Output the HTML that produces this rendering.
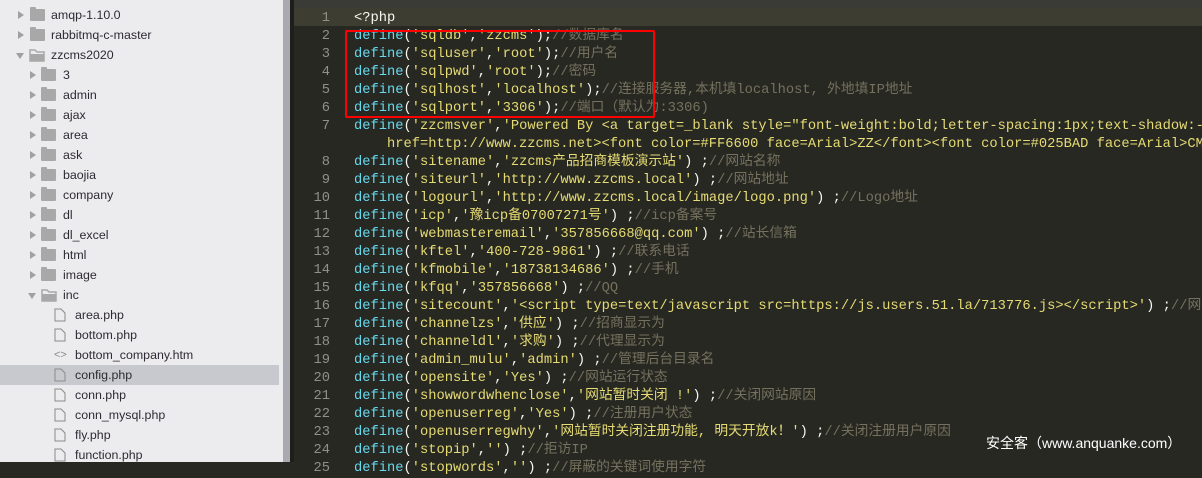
<!DOCTYPE html>
<html><head><meta charset="utf-8"><style>
*{margin:0;padding:0;box-sizing:border-box}
body{width:1202px;height:462px;overflow:hidden;background:#272822;position:relative;font-family:"Liberation Sans","Noto Sans CJK SC",sans-serif}
#side{position:absolute;left:0;top:0;width:283px;height:462px;background:#ececee;overflow:hidden}
#sb{position:absolute;left:283px;top:0;width:7px;height:462px;background:#a9a9b1}
#gap{position:absolute;left:290px;top:0;width:4px;height:462px;background:#1e1e1b}
.row{position:absolute;left:0;width:279px;height:20px;font-size:12.4px;color:#2e2a33;line-height:20px}
.row.sel{background:#c7c9cf}
.row span{position:absolute;top:0}
.arr{position:absolute;width:0;height:0}
.ar{border-left:6px solid #a0a0a0;border-top:4.5px solid transparent;border-bottom:4.5px solid transparent;top:6px}
.ad{border-top:6px solid #a0a0a0;border-left:4.5px solid transparent;border-right:4.5px solid transparent;top:8px}
.fold{position:absolute;top:4px;width:15px;height:12px;background:#a8a8a8;border-radius:1px}
.fold:before{content:"";position:absolute;left:0;top:-2px;width:6px;height:3px;background:#a8a8a8;border-radius:1px 1px 0 0}
.file{position:absolute;top:3px}
#tab{position:absolute;left:294px;top:0;right:0;height:8px;background:#3a3a36}
#hl{position:absolute;left:294px;top:8px;right:0;height:18px;background:#3e3d32}
.ln{position:absolute;left:294px;width:36px;text-align:right;font:13.75px/18px "Liberation Mono",monospace;color:#8f908a}
.cd{position:absolute;left:354px;white-space:pre;font:13.75px/18px "Liberation Mono","Noto Sans CJK SC",monospace;color:#f8f8f2}
.k{color:#66d9ef}.s{color:#e6db74}.c{color:#75715e}
#box{position:absolute;left:345px;top:30px;width:310px;height:88px;border:2px solid #f00;border-radius:2px}
#wm{position:absolute;left:986px;top:433px;font-size:14px;color:#fff;font-family:"Liberation Sans","Noto Sans CJK SC",sans-serif}
</style></head><body>
<div id="side">
<div class="row" style="top:5px"><i class="arr ar" style="left:18px"></i><i class="fold" style="left:30px"></i><span style="left:51px">amqp-1.10.0</span></div>
<div class="row" style="top:25px"><i class="arr ar" style="left:18px"></i><i class="fold" style="left:30px"></i><span style="left:51px">rabbitmq-c-master</span></div>
<div class="row" style="top:45px"><i class="arr ad" style="left:16px"></i><svg class="file" style="left:29px;top:4px" width="16" height="13"><path d="M1 1h5l2 2h7v9H1z" fill="none" stroke="#a8a8a8" stroke-width="1.5"/><path d="M1 5h14v7H1z" fill="#a8a8a8"/></svg><span style="left:51px">zzcms2020</span></div>
<div class="row" style="top:65px"><i class="arr ar" style="left:30px"></i><i class="fold" style="left:41px"></i><span style="left:63px">3</span></div>
<div class="row" style="top:85px"><i class="arr ar" style="left:30px"></i><i class="fold" style="left:41px"></i><span style="left:63px">admin</span></div>
<div class="row" style="top:105px"><i class="arr ar" style="left:30px"></i><i class="fold" style="left:41px"></i><span style="left:63px">ajax</span></div>
<div class="row" style="top:125px"><i class="arr ar" style="left:30px"></i><i class="fold" style="left:41px"></i><span style="left:63px">area</span></div>
<div class="row" style="top:145px"><i class="arr ar" style="left:30px"></i><i class="fold" style="left:41px"></i><span style="left:63px">ask</span></div>
<div class="row" style="top:165px"><i class="arr ar" style="left:30px"></i><i class="fold" style="left:41px"></i><span style="left:63px">baojia</span></div>
<div class="row" style="top:185px"><i class="arr ar" style="left:30px"></i><i class="fold" style="left:41px"></i><span style="left:63px">company</span></div>
<div class="row" style="top:205px"><i class="arr ar" style="left:30px"></i><i class="fold" style="left:41px"></i><span style="left:63px">dl</span></div>
<div class="row" style="top:225px"><i class="arr ar" style="left:30px"></i><i class="fold" style="left:41px"></i><span style="left:63px">dl_excel</span></div>
<div class="row" style="top:245px"><i class="arr ar" style="left:30px"></i><i class="fold" style="left:41px"></i><span style="left:63px">html</span></div>
<div class="row" style="top:265px"><i class="arr ar" style="left:30px"></i><i class="fold" style="left:41px"></i><span style="left:63px">image</span></div>
<div class="row" style="top:285px"><i class="arr ad" style="left:28px"></i><svg class="file" style="left:41px;top:4px" width="16" height="13"><path d="M1 1h5l2 2h7v9H1z" fill="none" stroke="#a8a8a8" stroke-width="1.5"/><path d="M1 5h14v7H1z" fill="#a8a8a8"/></svg><span style="left:63px">inc</span></div>
<div class="row" style="top:305px"><svg class="file" style="left:54px" width="12" height="14"><path d="M1 1h6l4 4v8H1z" fill="none" stroke="#8a8a8a"/></svg><span style="left:75px">area.php</span></div>
<div class="row" style="top:325px"><svg class="file" style="left:54px" width="12" height="14"><path d="M1 1h6l4 4v8H1z" fill="none" stroke="#8a8a8a"/></svg><span style="left:75px">bottom.php</span></div>
<div class="row" style="top:345px"><span style="left:54px;color:#8a8a8a;font-size:11px">&lt;&gt;</span><span style="left:75px">bottom_company.htm</span></div>
<div class="row sel" style="top:365px"><svg class="file" style="left:54px" width="12" height="14"><path d="M1 1h6l4 4v8H1z" fill="none" stroke="#8a8a8a"/></svg><span style="left:75px">config.php</span></div>
<div class="row" style="top:385px"><svg class="file" style="left:54px" width="12" height="14"><path d="M1 1h6l4 4v8H1z" fill="none" stroke="#8a8a8a"/></svg><span style="left:75px">conn.php</span></div>
<div class="row" style="top:405px"><svg class="file" style="left:54px" width="12" height="14"><path d="M1 1h6l4 4v8H1z" fill="none" stroke="#8a8a8a"/></svg><span style="left:75px">conn_mysql.php</span></div>
<div class="row" style="top:425px"><svg class="file" style="left:54px" width="12" height="14"><path d="M1 1h6l4 4v8H1z" fill="none" stroke="#8a8a8a"/></svg><span style="left:75px">fly.php</span></div>
<div class="row" style="top:445px"><svg class="file" style="left:54px" width="12" height="14"><path d="M1 1h6l4 4v8H1z" fill="none" stroke="#8a8a8a"/></svg><span style="left:75px">function.php</span></div>
</div>
<div id="sb"></div><div id="gap"></div>
<div id="tab"></div><div id="hl"></div>
<div class="ln" style="top:10px">1<br>2<br>3<br>4<br>5<br>6<br>7<br><br>8<br>9<br>10<br>11<br>12<br>13<br>14<br>15<br>16<br>17<br>18<br>19<br>20<br>21<br>22<br>23<br>24<br>25</div>
<div class="cd" style="top:10px">&lt;?php
<span class="k">define</span>(<span class="s">'sqldb'</span>,<span class="s">'zzcms'</span>);<span class="c">//数据库名</span>
<span class="k">define</span>(<span class="s">'sqluser'</span>,<span class="s">'root'</span>);<span class="c">//用户名</span>
<span class="k">define</span>(<span class="s">'sqlpwd'</span>,<span class="s">'root'</span>);<span class="c">//密码</span>
<span class="k">define</span>(<span class="s">'sqlhost'</span>,<span class="s">'localhost'</span>);<span class="c">//连接服务器,本机填localhost, 外地填IP地址</span>
<span class="k">define</span>(<span class="s">'sqlport'</span>,<span class="s">'3306'</span>);<span class="c">//端口（默认为:3306)</span>
<span class="k">define</span>(<span class="s">'zzcmsver'</span>,<span class="s">'Powered By &lt;a target=_blank style="font-weight:bold;letter-spacing:1px;text-shadow:-</span>
<span class="s">    href=http://www.zzcms.net&gt;&lt;font color=#FF6600 face=Arial&gt;ZZ&lt;/font&gt;&lt;font color=#025BAD face=Arial&gt;CMS</span>
<span class="k">define</span>(<span class="s">'sitename'</span>,<span class="s">'zzcms产品招商模板演示站'</span>) ;<span class="c">//网站名称</span>
<span class="k">define</span>(<span class="s">'siteurl'</span>,<span class="s">'http://www.zzcms.local'</span>) ;<span class="c">//网站地址</span>
<span class="k">define</span>(<span class="s">'logourl'</span>,<span class="s">'http://www.zzcms.local/image/logo.png'</span>) ;<span class="c">//Logo地址</span>
<span class="k">define</span>(<span class="s">'icp'</span>,<span class="s">'豫icp备07007271号'</span>) ;<span class="c">//icp备案号</span>
<span class="k">define</span>(<span class="s">'webmasteremail'</span>,<span class="s">'357856668@qq.com'</span>) ;<span class="c">//站长信箱</span>
<span class="k">define</span>(<span class="s">'kftel'</span>,<span class="s">'400-728-9861'</span>) ;<span class="c">//联系电话</span>
<span class="k">define</span>(<span class="s">'kfmobile'</span>,<span class="s">'18738134686'</span>) ;<span class="c">//手机</span>
<span class="k">define</span>(<span class="s">'kfqq'</span>,<span class="s">'357856668'</span>) ;<span class="c">//QQ</span>
<span class="k">define</span>(<span class="s">'sitecount'</span>,<span class="s">'&lt;script type=text/javascript src=https://js.users.51.la/713776.js&gt;&lt;/script&gt;'</span>) ;<span class="c">//网站</span>
<span class="k">define</span>(<span class="s">'channelzs'</span>,<span class="s">'供应'</span>) ;<span class="c">//招商显示为</span>
<span class="k">define</span>(<span class="s">'channeldl'</span>,<span class="s">'求购'</span>) ;<span class="c">//代理显示为</span>
<span class="k">define</span>(<span class="s">'admin_mulu'</span>,<span class="s">'admin'</span>) ;<span class="c">//管理后台目录名</span>
<span class="k">define</span>(<span class="s">'opensite'</span>,<span class="s">'Yes'</span>) ;<span class="c">//网站运行状态</span>
<span class="k">define</span>(<span class="s">'showwordwhenclose'</span>,<span class="s">'网站暂时关闭 !'</span>) ;<span class="c">//关闭网站原因</span>
<span class="k">define</span>(<span class="s">'openuserreg'</span>,<span class="s">'Yes'</span>) ;<span class="c">//注册用户状态</span>
<span class="k">define</span>(<span class="s">'openuserregwhy'</span>,<span class="s">'网站暂时关闭注册功能, 明天开放k！'</span>) ;<span class="c">//关闭注册用户原因</span>
<span class="k">define</span>(<span class="s">'stopip'</span>,<span class="s">''</span>) ;<span class="c">//拒访IP</span>
<span class="k">define</span>(<span class="s">'stopwords'</span>,<span class="s">''</span>) ;<span class="c">//屏蔽的关键词使用字符</span></div>
<div id="box"></div>
<div id="wm">安全客（www.anquanke.com）</div>
</body></html>
